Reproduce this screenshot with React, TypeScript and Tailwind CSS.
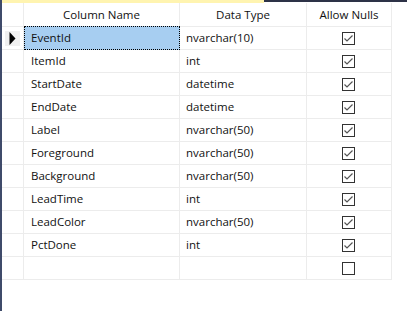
import React from 'react';

interface Column {
  name: string;
  type: string;
  nullable: boolean;
}

const columns: Column[] = [
  { name: 'EventId', type: 'nvarchar(10)', nullable: true },
  { name: 'ItemId', type: 'int', nullable: true },
  { name: 'StartDate', type: 'datetime', nullable: true },
  { name: 'EndDate', type: 'datetime', nullable: true },
  { name: 'Label', type: 'nvarchar(50)', nullable: true },
  { name: 'Foreground', type: 'nvarchar(50)', nullable: true },
  { name: 'Background', type: 'nvarchar(50)', nullable: true },
  { name: 'LeadTime', type: 'int', nullable: true },
  { name: 'LeadColor', type: 'nvarchar(50)', nullable: true },
  { name: 'PctDone', type: 'int', nullable: true },
];

const Checkbox: React.FC<{ checked: boolean }> = ({ checked }) => (
  <div className="w-[13px] h-[13px] border border-[#333333] bg-white flex items-center justify-center">
    {checked && (
      <svg width="11" height="11" viewBox="0 0 11 11">
        <path d="M1.5 5.5 L4 8 L9.5 2.5" fill="none" stroke="#555555" strokeWidth="1.2" />
      </svg>
    )}
  </div>
);

const Row: React.FC<{ col?: Column; selected?: boolean }> = ({ col, selected }) => (
  <div className="flex h-[23px]">
    <div className="w-[22px] border-r border-b border-[#ececec] flex items-center justify-center">
      {selected && (
        <div className="w-[15px] h-[15px] bg-[#f0f0f0] flex items-center justify-center">
          <svg width="7" height="13" viewBox="0 0 7 13">
            <path d="M0.5 0 L6.5 6.5 L0.5 13 Z" fill="#000" />
          </svg>
        </div>
      )}
    </div>
    <div className="relative w-[156px] border-r border-b border-[#ececec] flex items-center pl-[7px]">
      {selected && (
        <div className="absolute -top-px left-0 -right-px -bottom-px bg-[#a7cef1] border border-dotted border-black" />
      )}
      <span className="relative">{col?.name}</span>
    </div>
    <div className="w-[127px] border-r border-b border-[#ececec] flex items-center pl-[6px]">
      {col?.type}
    </div>
    <div className="w-[85px] border-r border-b border-[#ececec] flex items-center justify-center pr-[1px]">
      <Checkbox checked={col ? col.nullable : false} />
    </div>
  </div>
);

const App: React.FC = () => {
  return (
    <div
      className="w-[407px] h-[311px] bg-white flex text-[11.5px] text-[#111111] overflow-hidden"
      style={{ fontFamily: '"Open Sans", "Noto Sans", sans-serif' }}
    >
      {/* Left edge */}
      <div className="w-[2px] h-full bg-[#3f4b6a]" />

      <div className="flex-1 flex flex-col">
        {/* Top strip */}
        <div className="flex h-[3px]">
          <div className="w-[262px] bg-[#fff4b0]" />
          <div className="flex-1 h-[2px] bg-[#2d3247]" />
        </div>

        {/* Header */}
        <div className="flex h-[24px]">
          <div className="w-[22px] border-r border-b border-[#ececec]" />
          <div className="w-[156px] border-r border-b border-[#ececec] flex items-center justify-center">
            Column Name
          </div>
          <div className="w-[127px] border-r border-b border-[#ececec] flex items-center justify-center">
            Data Type
          </div>
          <div className="w-[85px] border-r border-b border-[#ececec] flex items-center justify-center">
            Allow Nulls
          </div>
        </div>

        {columns.map((c, i) => (
          <Row key={c.name} col={c} selected={i === 0} />
        ))}
        <Row />
      </div>
    </div>
  );
};

export default App;
